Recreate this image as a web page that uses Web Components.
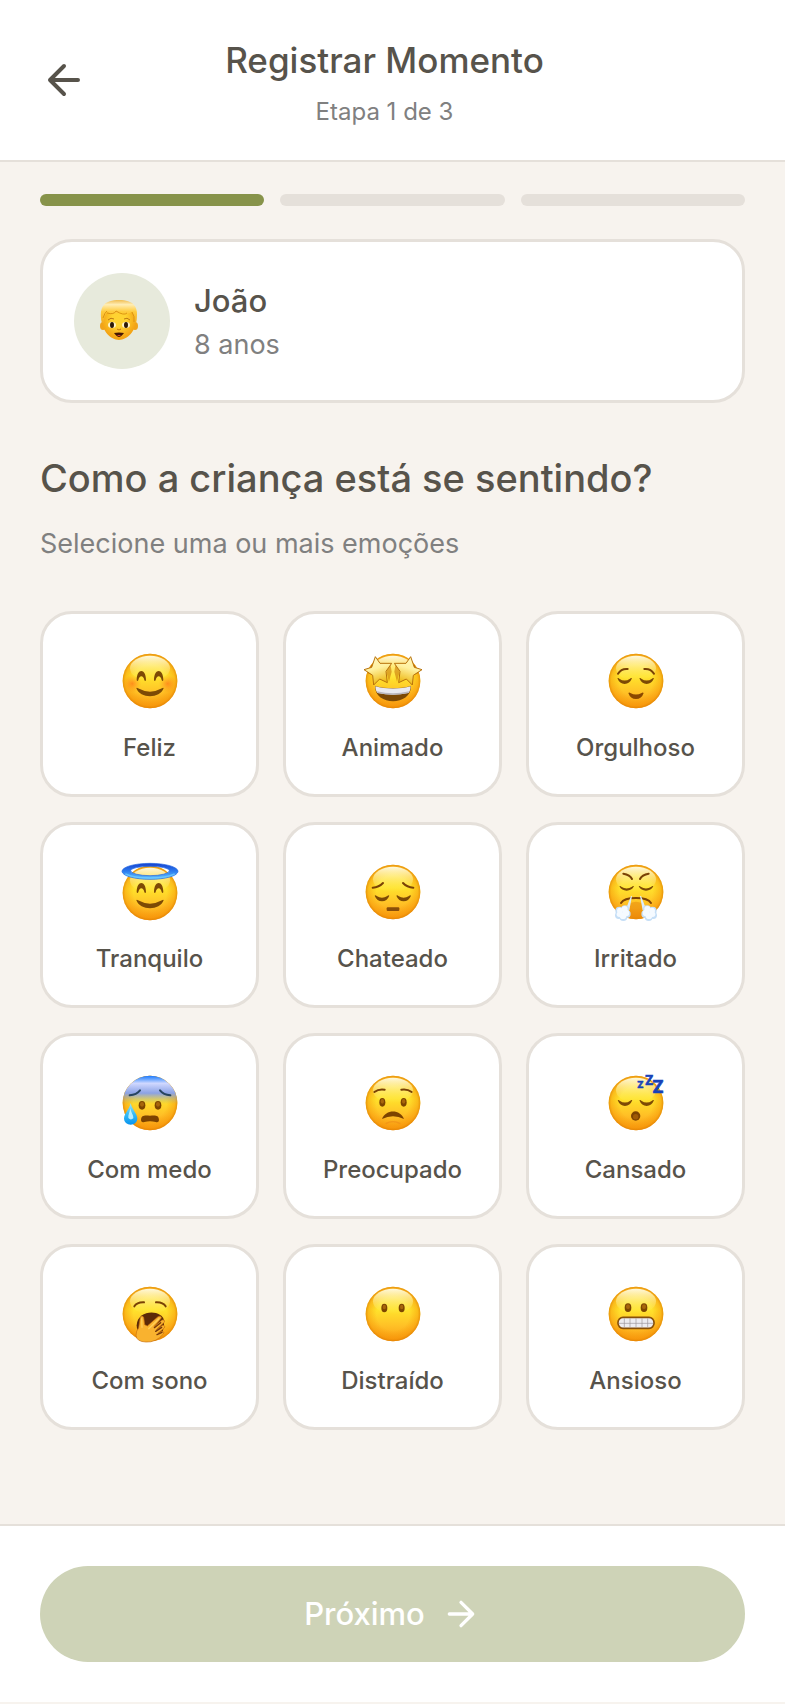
<!DOCTYPE html>
<html lang="pt-BR">
<head>
<meta charset="utf-8">
<meta name="viewport" content="width=device-width, initial-scale=1">
<title>Registrar Momento</title>
<style>
	:root {
		--ink: #57534B;
		--muted: #808080;
		--line: #E5E0DA;
		--paper: #F7F3EE;
		--olive: #87934A;
	}

	body {
		margin: 0;
		background: var(--paper);
		color: var(--ink);
		font-family: Inter, "Liberation Sans", sans-serif;
	}
</style>
</head>
<body>
<moment-page>
	<step-header slot="header" data-title="Registrar Momento" data-subtitle="Etapa 1 de 3"></step-header>
	<step-progress data-step="1" data-total="3"></step-progress>
	<child-card><span slot="name">João</span><span slot="age">8 anos</span></child-card>
	<question-title><span slot="title">Como a criança está se sentindo?</span><span slot="hint">Selecione uma ou mais emoções</span></question-title>
	<emotion-grid>
		<emotion-card data-face="happy">Feliz</emotion-card>
		<emotion-card data-face="starry">Animado</emotion-card>
		<emotion-card data-face="proud">Orgulhoso</emotion-card>
		<emotion-card data-face="calm">Tranquilo</emotion-card>
		<emotion-card data-face="upset">Chateado</emotion-card>
		<emotion-card data-face="angry">Irritado</emotion-card>
		<emotion-card data-face="scared">Com medo</emotion-card>
		<emotion-card data-face="worried">Preocupado</emotion-card>
		<emotion-card data-face="tired">Cansado</emotion-card>
		<emotion-card data-face="sleepy">Com sono</emotion-card>
		<emotion-card data-face="distracted">Distraído</emotion-card>
		<emotion-card data-face="anxious">Ansioso</emotion-card>
	</emotion-grid>
	<next-bar slot="footer">Próximo</next-bar>
</moment-page>

<script>
// Faces share one disc of radius 82 centred on 0,0
const eye = (x, y, rx = 9, ry = 13) => `
	<ellipse cx="${x}" cy="${y}" rx="${rx}" ry="${ry}" fill="#7d4600"/>
	<ellipse cx="${x}" cy="${y - 3}" rx="${rx - 4}" ry="${ry - 6}" fill="#a8660c"/>`;

const lid = (x, y, depth = 17) => `
	<path fill="#7d4a05" d="M${x - 22} ${y}q3-3 6 1q16 11 32 0q3-4 6-1q-7 ${depth}-22 ${depth}t-22-${depth}z"/>`;

const brows = (d, color = "#7a4205") => `
	<g fill="none" stroke="${color}" stroke-width="6" stroke-linecap="round">
		<path d="${d}"/><path d="${d}" transform="scale(-1 1)"/>
	</g>`;

const smile = `
	<g fill="#7d4a05">
		<path d="M-40-2C-40-39-12-39-12-2q-3 5-5-1q-3-11-9-11t-9 11q-2 6-5 1z"/>
		<path d="M40-2C40-39 12-39 12-2q3 5 5-1q3-11 9-11t9 11q2 6 5 1z"/>
		<path d="M-41 22q1-4 5 0q36 20 72 0q4-4 5 0C30 54-30 54-41 22z"/>
	</g>`;

const star = "M-53-73L-39-53L-4-53L-21-29L-17 5L-40-6L-58 12L-61-17L-87-34L-64-41Z";

const cloud = `
	<path d="M-15 12L-30 50L-20 54L-12 12Z" fill="#dcecfb"/>
	<g fill="#c5def6">
		<circle cx="-50" cy="56" r="12"/><circle cx="-33" cy="52" r="12"/><circle cx="-28" cy="66" r="12"/>
		<circle cx="-38" cy="75" r="12"/><circle cx="-52" cy="70" r="11"/>
	</g>
	<g fill="#f5faff">
		<circle cx="-48" cy="56" r="9"/><circle cx="-34" cy="51" r="9"/><circle cx="-30" cy="63" r="10"/>
		<circle cx="-39" cy="71" r="10"/><circle cx="-50" cy="67" r="8"/>
	</g>`;

const faces = {
	happy: `
		<circle cx="-53" cy="8" r="27" fill="url(#blush)"/><circle cx="53" cy="8" r="27" fill="url(#blush)"/>
		${smile}`,
	starry: `
		<path d="M-76-24L-64-50L-56-16zM76-24L64-50L56-16z" fill="#b85e00" opacity=".8"/>
		<path d="M-8-52L-20-28L-12 2L-4-28zM8-52L20-28L12 2L4-28z" fill="#c97a06" opacity=".6"/>
		<path d="M-54 15C-22 24 22 24 54 15C55 76-55 76-54 15z" fill="#7b4805"/>
		<path d="M-53 16C-22 25 22 25 53 16Q52 31 46 36Q0 46-46 36Q-52 31-53 16z" fill="#e9e9ef"/>
		<path d="M-48 31Q0 43 48 31L46 36Q0 46-46 36z" fill="#b9b6bd"/>
		<g fill="url(#star)" stroke="#b8720c" stroke-width="3" stroke-linejoin="round">
			<path d="${star}"/><path d="${star}" transform="scale(-1 1)"/>
		</g>`,
	proud: `
		${brows("M-54-22Q-44-38-25-36")}
		${lid(-34, -8)}${lid(32, -8)}
		<path d="M-23 36q3-3 6 0q17 9 34 0q3-3 6 0Q17 54 0 54T-23 36z" fill="#8a4800"/>`,
	calm: `
		${smile}
		<path fill="url(#halo)" stroke="#1c62df" stroke-width="2" fill-rule="evenodd"
			d="M-84-65a84 24 0 0 1 168 0a84 24 0 0 1-168 0zM-58-67a58 15 0 0 0 116 0a58 13 0 0 0-116 0z"/>
		<path d="M-74-57Q-50-45 0-45T74-57" fill="none" stroke="#72d0ff" stroke-width="5" opacity=".7"/>`,
	upset: `
		${brows("M-61-13Q-42-14-30-27")}
		${lid(-33, 11)}${lid(32, 11)}
		<rect x="-19" y="46" width="38" height="11" rx="3" fill="#8a4e08"/>`,
	angry: `
		${brows("M-38-55Q-18-52-12-39")}
		${lid(-28, -17, 13)}${lid(30, -17, 13)}
		<path d="M-45 33Q-36 18 0 18T45 33" fill="none" stroke="#7d4205" stroke-width="6" stroke-linecap="round"/>
		<path d="M-18 34Q0 24 18 34L20 74Q0 84-20 74z" fill="#e38108" opacity=".45"/>
		${cloud}<g transform="scale(-1 1)">${cloud}</g>`,
	scared: `
		<circle r="82" fill="url(#cold)"/>
		${brows("M-61-23Q-40-25-30-38", "#27455f")}
		${eye(-24, 7, 10)}${eye(24, 7, 10)}
		<path d="M-27 52C-27 34-13 38 0 38S27 34 27 52Q26 60 17 57Q0 53-17 57Q-26 60-27 52z" fill="#7d4300"/>
		<path d="M-58 0C-54 20-38 32-38 47a20 18 0 0 1-40 0C-78 32-62 20-58 0z" fill="url(#drop)"/>
		<path d="M-59 16C-57 30-49 36-50 46Q-58 53-65 45C-66 36-61 28-59 16z" fill="#d9faff" opacity=".8"/>`,
	worried: `
		${brows("M-56-33Q-43-43-25-40")}
		${eye(-32, -2)}${eye(32, -2)}
		<path d="M-33 48C-22 18 22 18 33 48Q0 32-33 48z" fill="#7d4300"/>
		<path d="M-22 62Q0 50 22 62" fill="none" stroke="#ef8f17" stroke-width="4" opacity=".7"/>`,
	tired: `
		${lid(-33, -8)}${lid(32, -8)}
		<circle cx="-1" cy="39" r="14" fill="#7d4300"/><circle cx="-1" cy="41" r="8" fill="#a05a05"/>
		<g fill="#1742b8" stroke="#1742b8" stroke-width="2" font-family="Inter, sans-serif" font-weight="700" aria-hidden="true">
			<text x="4" y="-45" font-size="28">Z</text>
			<text x="27" y="-53" font-size="38">Z</text>
			<text x="49" y="-31" font-size="52">Z</text>
		</g>`,
	sleepy: `
		${brows("M-47-23Q-39-36-18-35")}
		<path d="M-40 34C-38-16 38-14 42 20Q44 66 10 76Q-40 66-40 34z" fill="#5d2a08"/>
		<path d="M-34 42L-29 10Q-24 2-19 10L-16 32L-8 36L24 8Q34 4 34 12L12 38L36 18Q46 16 43 25L19 47L38 34Q47 34 43 42L24 58L36 52Q46 53 40 60Q18 86-12 84Q-41 83-42 64Q-42 50-34 42z" fill="#f9b22f" stroke="#c9700d" stroke-width="2"/>
		<path d="M-25 14L-24 40M-4 44L27 14" fill="none" stroke="#ffcf57" stroke-width="4" stroke-linecap="round"/>
		<path d="M13 41L32 26M17 52L35 40M21 62L36 55" fill="none" stroke="#74360a" stroke-width="4" stroke-linecap="round"/>`,
	distracted: `${eye(-26, -18)}${eye(26, -18)}`,
	anxious: `
		${eye(-24, -19, 10)}${eye(24, -19, 10)}
		<rect x="-54" y="10" width="108" height="33" rx="15" fill="#ececf1" stroke="#87500a" stroke-width="5"/>
		<path d="M-52 28H52M-35 13V40M-18 13V40M0 13V40M18 13V40M35 13V40" stroke="#9a9499" stroke-width="2"/>`
};

const drawFace = (name) => `
	<svg viewBox="-108 -108 216 216" width="72" height="72" aria-hidden="true">
		<defs>
			<linearGradient id="skin" x2="0" y2="1">
				<stop offset="0" stop-color="#ffd238"/><stop offset=".42" stop-color="#ffe32c"/>
				<stop offset=".72" stop-color="#ffc026"/><stop offset="1" stop-color="#f99c12"/>
			</linearGradient>
			<radialGradient id="rim">
				<stop offset=".6" stop-color="#f58b00" stop-opacity="0"/><stop offset=".9" stop-color="#f48c00" stop-opacity=".42"/>
				<stop offset="1" stop-color="#dd7c00" stop-opacity=".75"/>
			</radialGradient>
			<linearGradient id="gloss" x2="0" y2="1">
				<stop offset="0" stop-color="#fffde8" stop-opacity=".95"/><stop offset="1" stop-color="#fff36b" stop-opacity="0"/>
			</linearGradient>
			<radialGradient id="blush">
				<stop offset="0" stop-color="#ff6b16" stop-opacity=".65"/><stop offset="1" stop-color="#ff8a1b" stop-opacity="0"/>
			</radialGradient>
			<linearGradient id="star" x2=".3" y2="1">
				<stop offset="0" stop-color="#fff8c4"/><stop offset=".5" stop-color="#fff1a0"/><stop offset="1" stop-color="#eebb18"/>
			</linearGradient>
			<linearGradient id="halo" x2="0" y2="1">
				<stop offset="0" stop-color="#1741cf"/><stop offset=".5" stop-color="#2c7df0"/><stop offset="1" stop-color="#64c4ff"/>
			</linearGradient>
			<linearGradient id="cold" x2="0" y2="1">
				<stop offset="0" stop-color="#1978ff"/><stop offset=".06" stop-color="#62a2ff"/><stop offset=".14" stop-color="#d0d8ff"/>
				<stop offset=".32" stop-color="#8ba2e5"/><stop offset=".52" stop-color="#b6b07c" stop-opacity="0"/>
			</linearGradient>
			<linearGradient id="drop" x2="0" y2="1">
				<stop offset="0" stop-color="#9be7ff"/><stop offset=".5" stop-color="#38bcf6"/><stop offset="1" stop-color="#0894ee"/>
			</linearGradient>
		</defs>
		<g transform="translate(0 ${name === "calm" ? 3 : 0})">
			<circle r="82" fill="url(#skin)"/>
			<circle r="82" fill="url(#rim)"/>
			<ellipse cy="-38" rx="60" ry="38" fill="url(#gloss)"/>
			${faces[name]}
		</g>
	</svg>`;

class MomentPage extends HTMLElement {
	connectedCallback() {
		this.attachShadow({ mode: "open" }).innerHTML = `
			<style>
				:host {
					display: flex;
					flex-direction: column;
					min-height: 100vh;
				}

				main {
					flex: 1;
					padding: 32px 40px 40px;
				}
			</style>
			<slot name="header"></slot>
			<main><slot></slot></main>
			<slot name="footer"></slot>
		`;
	}
}

class StepHeader extends HTMLElement {
	connectedCallback() {
		this.attachShadow({ mode: "open" }).innerHTML = `
			<style>
				:host {
					display: block;
					background: #FFFFFF;
					border-bottom: 2px solid var(--line);
				}

				header {
					display: grid;
					grid-template-columns: 48px 1fr 64px;
					align-items: center;
					padding: 32px 40px;
					text-align: center;
				}

				button {
					display: flex;
					padding: 0;
					border: 0;
					background: transparent;
					color: inherit;
					cursor: pointer;
				}

				h1, p {
					margin: 0;
				}

				h1 {
					font-size: 35px;
					font-weight: 500;
					line-height: 56px;
				}

				p {
					margin-top: 8px;
					color: var(--muted);
					font-size: 24px;
					line-height: 32px;
				}
			</style>
			<header>
				<button type="button" aria-label="Voltar">
					<svg width="48" height="48" viewBox="0 0 24 24" fill="none" stroke="currentColor" stroke-width="2" stroke-linecap="round" stroke-linejoin="round"><path d="m12 19-7-7 7-7M19 12H5"/></svg>
				</button>
				<div>
					<h1>${this.dataset.title}</h1>
					<p>${this.dataset.subtitle}</p>
				</div>
			</header>
		`;
	}
}

class StepProgress extends HTMLElement {
	connectedCallback() {
		const step = Number(this.dataset.step);
		const bars = Array.from({ length: Number(this.dataset.total) }, (_, i) => `<span class="${i < step ? "done" : ""}"></span>`);
		this.attachShadow({ mode: "open" }).innerHTML = `
			<style>
				:host {
					display: flex;
					gap: 16px;
				}

				span {
					flex: 1;
					height: 12px;
					border-radius: 6px;
					background: var(--line);
				}

				.done {
					background: var(--olive);
				}
			</style>
			${bars.join("")}
		`;
	}
}

class ChildCard extends HTMLElement {
	connectedCallback() {
		this.attachShadow({ mode: "open" }).innerHTML = `
			<style>
				:host {
					display: flex;
					align-items: center;
					gap: 24px;
					margin-top: 33px;
					padding: 31px;
					border: 3px solid var(--line);
					border-radius: 32px;
					background: #FFFFFF;
				}

				.avatar {
					display: grid;
					place-items: center;
					width: 96px;
					height: 96px;
					border-radius: 50%;
					background: #E7EADC;
				}

				.name, .age {
					display: block;
				}

				.name {
					font-size: 31px;
					font-weight: 500;
					line-height: 48px;
				}

				.age {
					color: var(--muted);
					font-size: 27px;
					line-height: 40px;
				}
			</style>
			<div class="avatar">
				<svg viewBox="-21 -23 48 48" width="48" height="48" aria-hidden="true">
					<defs>
						<radialGradient id="face" cy=".45">
							<stop offset=".4" stop-color="#ffd331"/><stop offset="1" stop-color="#f4a414"/>
						</radialGradient>
						<linearGradient id="hair" x2="0" y2="1">
							<stop offset="0" stop-color="#f0bd52"/><stop offset=".2" stop-color="#ffedb4"/>
							<stop offset=".5" stop-color="#ffcc3e"/><stop offset="1" stop-color="#f2ac20"/>
						</linearGradient>
					</defs>
					<ellipse cx="-16" cy="6" rx="3" ry="4" fill="#f0a31b"/><ellipse cx="16" cy="6" rx="3" ry="4" fill="#f0a31b"/>
					<path d="M-17-4C-17-24 17-24 17-4C19 9 9 20 0 20S-19 9-17-4z" fill="url(#face)"/>
					<path d="M-17 3C-21-14-14-20 0-20S21-14 17 3L15 3Q16-4 13-8Q8-5 2-8Q-4-5-12-8Q-15-4-15 3z" fill="url(#hair)"/>
					<path d="M-12-7Q-5-5-3-9Q5-4 8-7M-16-2Q-14-8-12-9M13-8Q16-4 15 2" fill="none" stroke="#dc9313" stroke-width="1"/>
					<path d="M-11 0Q-8-3-5-1M5-1Q8-3 11 0" fill="none" stroke="#bc7812" stroke-width="1"/>
					<ellipse cx="-7" cy="5" rx="4" ry="3" fill="#fff4c9"/><ellipse cx="7" cy="5" rx="4" ry="3" fill="#fff4c9"/>
					<ellipse cx="-7" cy="5" rx="2" ry="3" fill="#2d1908"/><ellipse cx="7" cy="5" rx="2" ry="3" fill="#2d1908"/>
					<path d="M-2 9Q0 11 2 9" fill="none" stroke="#c5750e" stroke-width="1"/>
					<path d="M-5 13Q0 12 5 13Q2 17 0 17T-5 13z" fill="#441704"/><path d="M-2 16Q0 14 2 16z" fill="#ed4a34"/>
				</svg>
			</div>
			<div>
				<slot class="name" name="name"></slot>
				<slot class="age" name="age"></slot>
			</div>
		`;
	}
}

class QuestionTitle extends HTMLElement {
	connectedCallback() {
		this.attachShadow({ mode: "open" }).innerHTML = `
			<style>
				:host {
					display: block;
					margin: 48px 0 44px;
				}

				h2, p {
					margin: 0;
				}

				h2 {
					font-size: 38px;
					font-weight: 500;
					line-height: 54px;
				}

				p {
					margin-top: 16px;
					color: var(--muted);
					font-size: 27px;
					line-height: 46px;
				}
			</style>
			<h2><slot name="title"></slot></h2>
			<p><slot name="hint"></slot></p>
		`;
	}
}

class EmotionGrid extends HTMLElement {
	connectedCallback() {
		this.attachShadow({ mode: "open" }).innerHTML = `
			<style>
				:host {
					display: grid;
					grid-template-columns: repeat(3, 1fr);
					gap: 25px 24px;
				}
			</style>
			<slot></slot>
		`;
	}
}

class EmotionCard extends HTMLElement {
	connectedCallback() {
		const shadowRoot = this.attachShadow({ mode: "open" });
		shadowRoot.innerHTML = `
			<style>
				:host {
					display: block;
				}

				button {
					display: flex;
					flex-direction: column;
					align-items: center;
					gap: 16px;
					width: 100%;
					padding: 31px 8px;
					border: 3px solid var(--line);
					border-radius: 32px;
					background: #FFFFFF;
					color: inherit;
					font: 500 24px/30px Inter, "Liberation Sans", sans-serif;
					cursor: pointer;

					&[aria-pressed="true"] {
						border-color: var(--olive);
					}
				}

				svg {
					display: block;
					overflow: visible;
				}
			</style>
			<button type="button" aria-pressed="false">
				${drawFace(this.dataset.face)}
				<span><slot></slot></span>
			</button>
		`;

		const button = shadowRoot.querySelector("button");
		button.addEventListener("click", () => {
			button.setAttribute("aria-pressed", button.getAttribute("aria-pressed") !== "true");
		});
	}
}

class NextBar extends HTMLElement {
	connectedCallback() {
		this.attachShadow({ mode: "open" }).innerHTML = `
			<style>
				:host {
					display: block;
					padding: 40px;
					border-top: 2px solid var(--line);
					border-bottom: 2px solid var(--paper);
					background: #FFFFFF;
				}

				button {
					display: flex;
					align-items: center;
					justify-content: center;
					gap: 16px;
					width: 100%;
					height: 96px;
					border: 0;
					border-radius: 48px;
					background: #CED3B7;
					color: #FFFFFF;
					font: 500 31px/48px Inter, "Liberation Sans", sans-serif;
				}
			</style>
			<button type="button" disabled>
				<span><slot></slot></span>
				<svg width="40" height="40" viewBox="0 0 24 24" fill="none" stroke="currentColor" stroke-width="2" stroke-linecap="round" stroke-linejoin="round" aria-hidden="true"><path d="M5 12h14M12 5l7 7-7 7"/></svg>
			</button>
		`;
	}
}

customElements.define("moment-page", MomentPage);
customElements.define("step-header", StepHeader);
customElements.define("step-progress", StepProgress);
customElements.define("child-card", ChildCard);
customElements.define("question-title", QuestionTitle);
customElements.define("emotion-grid", EmotionGrid);
customElements.define("emotion-card", EmotionCard);
customElements.define("next-bar", NextBar);
</script>
</body>
</html>
